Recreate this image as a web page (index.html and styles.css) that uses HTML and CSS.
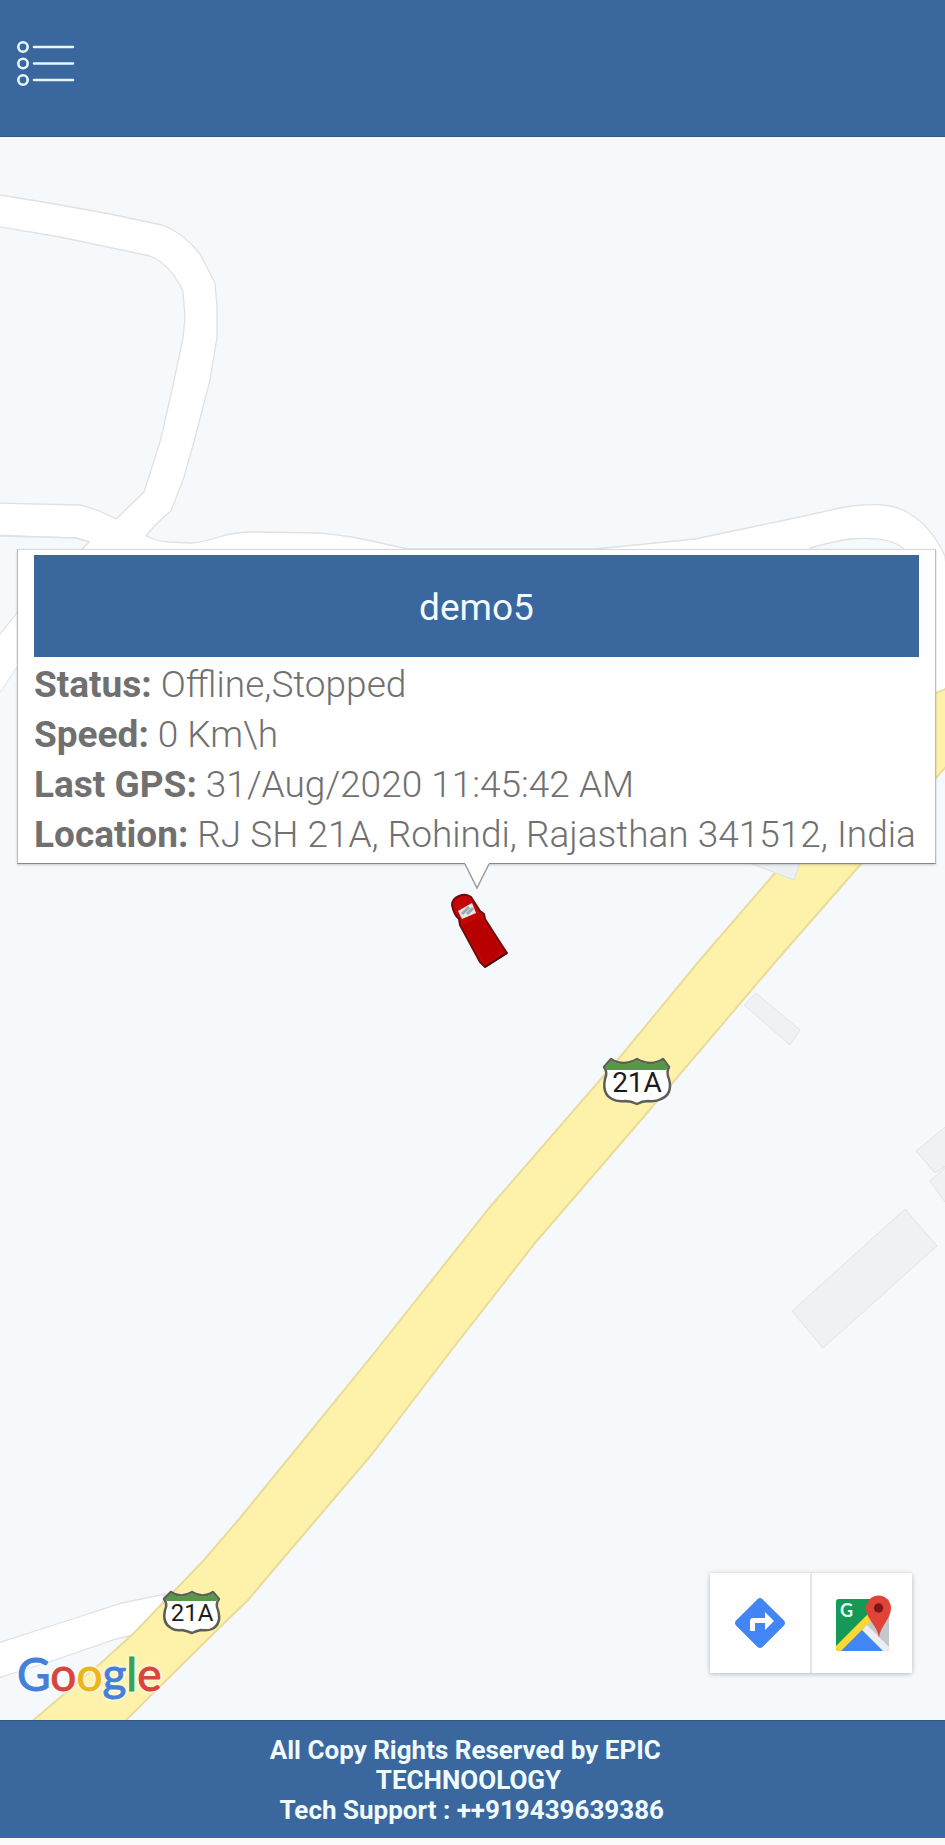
FILE: index.html
```html
<!DOCTYPE html>
<html lang="en">
<head>
<meta charset="utf-8">
<meta name="viewport" content="width=device-width, initial-scale=1">
<title>Vehicle tracking</title>
<link rel="stylesheet" href="styles.css">
</head>
<body>
<header class="topbar">
  <button class="menu" type="button" aria-label="Menu">
    <svg viewBox="0 0 58 46" width="58" height="46" fill="none" stroke="#e6f7ff" stroke-width="2.6">
      <circle cx="6" cy="6" r="4.7"/><circle cx="6" cy="22.500" r="4.700"/><circle cx="6" cy="39" r="4.700"/>
      <path d="M17 6h39M17 22.500h39M17 39h39" stroke-linecap="round"/>
    </svg>
  </button>
</header>

<main class="map">
  <svg class="canvas" viewBox="0 137 945 1583" preserveAspectRatio="xMidYMid slice" aria-hidden="true">
    <g fill="#eff2f5" stroke="#e1e4e7" stroke-width="1">
      <path d="M905 1209L937 1246L823 1348L792 1311Z"/>
      <path d="M950 1123L916 1151L935 1173L950 1163Z"/>
      <path d="M950 1163L930 1181L950 1209Z"/>
      <path d="M756 993L800 1030L790 1045L744 1005Z"/>
    </g>
    <g fill="#fff" stroke="#dfe1e3" stroke-width="1.300" stroke-linejoin="round">
      <path d="M-5 194L0 195L55 204L110 214L162 225Q182 232 200 254L215 283L217 307L217 337L210 380L195 438L184 477L171 511Q157 522 146 536Q156 541 168 542L192 543Q204 542 222 536Q236 532 255 532L320 533Q350 536 372 541L408 549L595 549L695 539L790 519L845 507Q885 501 903 510Q930 523 945 556L960 700H903V548Q888 536 850 539Q835 541 810 548V600H-5V535L40 537L75 538Q84 540 89 542L82 549L17 613L-5 644V503L80 505Q95 508 116 519L144 492L160 442L172 390L183 338L185 318L183 291Q170 264 150 256L60 237L-5 226Z"/>
    </g>
    <path d="M-5 536L40 537L75 538Q84 540 89 542L82 549L17 613L-5 641Z" fill="#f6f9fb" stroke="#dfe1e3" stroke-width="1.300"/>
    <path d="M-5 641L17 613L60 570V640L17 667L-5 700Z" fill="#fff" stroke="#dfe1e3"/>
    <path d="M-5 1644L60 1623L122 1603L165 1594L155 1630L116 1639L55 1660L-5 1679Z" fill="#fff" stroke="#dfe1e3" stroke-width="1.300"/>
    <path d="M950 687L929 696L775 873L700 960L620 1057L490 1207L375 1352L310 1432L240 1518L204 1560L135 1632L102 1662L30 1723H123L215 1632L248 1600L281 1561L372 1454L450 1352L535 1243L641 1120L777 960L861 864L950 762Z" fill="#fef2ab" stroke="#eadb9a" stroke-width="2"/>
    <path d="M747 862L794 880L801 860Z" fill="#edf0f2" stroke="#dfe1df"/>
    <g transform="translate(603 1056)">
      <path class="shield" d="M8 3Q20 11 34 3Q48 11 60 3L66 11Q63 16 66 23Q70 38 58 43Q53 46 45 45Q39 45 34 48Q28 45 22 45Q14 46 9 43Q-1 38 2 23Q5 16 1 11Z"/>
      <path d="M8 4Q20 12 34 4Q48 12 60 4L65 11L63 14H4L2 11Z" fill="#58974a"/>
      <text class="route route-large" x="34" y="36">21A</text>
    </g>
    <g transform="translate(163 1590)">
      <path class="shield" d="M8 2Q18 9 29 2Q40 9 50 2L56 9Q52 14 55 20Q59 34 49 39Q45 41 38 40Q33 41 29 43Q24 41 19 40Q12 41 8 38Q-1 33 2 20Q5 14 1 9Z"/>
      <path d="M8 3Q18 10 29 3Q40 10 50 3L55 9L53 11H4L2 9Z" fill="#58974a"/>
      <text class="route" x="29" y="31">21A</text>
    </g>
    <g stroke-linejoin="round">
      <path d="M452 905Q452 899 459 896Q466 893 471 897L480 911L484 914L485 919L501 944L507 953L485 967L480 962L460 925L459 919Q454 915 452 905Z" fill="#c30707" stroke="#720a0c" stroke-width="2"/>
      <path d="M462 926L481 917L504 952L485 964Z" fill="#b90000"/>
      <path d="M485 967L507 953" stroke="#530508" stroke-width="2"/>
      <path d="M458 911L472 903L476 913L462 919Z" fill="#e7e9e8"/>
      <path d="M462 914L469 907M467 914L473 908" stroke="#9aabae" stroke-width="3"/>
    </g>
  </svg>

  <section class="popup" aria-label="Vehicle details">
    <h1 class="name">demo5</h1>
    <p><b>Status:</b> Offline,Stopped</p>
    <p><b>Speed:</b> 0 Km\h</p>
    <p><b>Last GPS:</b> 31/Aug/2020 11:45:42 AM</p>
    <p><b>Location:</b> RJ SH 21A, Rohindi, Rajasthan 341512, India</p>
    <svg class="pointer" viewBox="0 0 26 28" width="26" height="28" aria-hidden="true">
      <path d="M1 0V2L13 26L25 2V0Z" fill="#fff"/>
      <path d="M1 2L13 26L25 2" fill="none" stroke="#9a9c9e" stroke-width="1.500"/>
    </svg>
  </section>

  <a class="google" href="#" aria-label="Google"><span class="blue">G</span><span class="red">o</span><span class="gold">o</span><span class="blue">g</span><span class="green">l</span><span class="red">e</span></a>

  <div class="actions">
    <button type="button" aria-label="Directions">
      <svg viewBox="0 0 52 52" width="52" height="52">
        <path d="M23.500 2.200Q26 0 28.500 2.200L50 23.500Q52 26 50 28.500L28.500 50Q26 52 23.500 50L2 28.500Q0 26 2 23.500Z" fill="#4285f4"/>
        <path d="M16 34V24Q16 21 19 21H31V15L40 24L31 33V26H21V34Z" fill="#fff"/>
      </svg>
    </button>
    <button type="button" aria-label="Open in Google Maps">
      <svg viewBox="0 0 58 58" width="58" height="58">
        <defs><clipPath id="tile"><rect x="3" y="5" width="53" height="52" rx="3"/></clipPath></defs>
        <g clip-path="url(#tile)">
          <path d="M0 4H56V58H0Z" fill="#159957"/>
          <path d="M28 30L56 3V58Z" fill="#c4c7cb"/>
          <path d="M7 58L29 36L51 58Z" fill="#4285f4"/>
          <path d="M0 55L36 19L40 25L7 58H0Z" fill="#fdd835"/>
          <path d="M29 36L34 31L60 57V60H53Z" fill="#eceef5"/>
        </g>
        <text class="tile-g" x="7" y="23">G</text>
        <path d="M46 44C45 32 33 25 33 14A12.500 12.500 0 0 1 58 14C58 25 47 32 46 44Z" fill="#e24339"/>
        <circle cx="45.500" cy="14" r="4.700" fill="#7c1815"/>
      </svg>
    </button>
  </div>
</main>

<footer class="footer">
  All Copy Rights Reserved by EPIC&nbsp;<br>TECHNOOLOGY<br>&nbsp;Tech Support : ++919439639386
</footer>
</body>
</html>
```
FILE: styles.css
```css
* {
  box-sizing: border-box;
}

body {
  margin: 0;
  min-height: 100vh;
  padding-bottom: 7px;
  display: flex;
  flex-direction: column;
  background: #fafafa;
  font-family: Roboto, "Liberation Sans", sans-serif;
}

.topbar {
  padding: 41px 17px 47px;
  background: #3a679d;
  border-bottom: 1px solid #315a83;
}

button {
  margin: 0;
  padding: 0;
  border: 0;
  background: none;
  cursor: pointer;
}

button svg {
  display: block;
}

.menu {
  display: block;
  padding-bottom: 2px;
}

.map {
  position: relative;
  flex: 1;
  overflow: hidden;
  background: #f6f9fb;
}

.canvas {
  position: absolute;
  width: 100%;
  height: 100%;
}

.shield {
  fill: #fff;
  stroke: #5d5e57;
  stroke-width: 2.5px;
  stroke-linejoin: round;
}

.route {
  fill: #1c1c1c;
  font-size: 24px;
  text-anchor: middle;
}

.route-large {
  font-size: 28px;
}

.popup {
  position: absolute;
  top: 412px;
  left: 17px;
  right: 9px;
  padding: 5px 16px 3px;
  border: 1px solid #b9bbbc;
  border-top-color: #d8d8d8;
  border-bottom-color: #858789;
  background: #fff;
  box-shadow: 0 1px 2px #0003;
  color: #707070;
  font-size: 37px;
  font-weight: 350;
  line-height: 50px;
}

.popup p {
  margin: 0;
}

.popup b {
  font-weight: 700;
}

.name {
  margin: 0 0 3px;
  padding: 28px 0 24px;
  background: #3a679d;
  color: #f2fbff;
  font-size: 37px;
  font-weight: 400;
  text-align: center;
}

.pointer {
  position: absolute;
  top: 100%;
  left: 50%;
  margin: -1px 0 0 -13px;
}

.google {
  position: absolute;
  left: 17px;
  bottom: 17px;
  font-family: Lato, sans-serif;
  font-size: 46px;
  line-height: 58px;
  text-decoration: none;
  text-shadow: 0 0 3px #fff, 0 0 3px #fff, 0 0 5px #fff;
  -webkit-text-stroke: 1px;
}

.blue { color: #4580d8; }
.red { color: #d8453e; }
.gold { color: #ecb51c; }
.green { color: #36a156; }

.actions {
  position: absolute;
  right: 33px;
  bottom: 47px;
  display: flex;
  gap: 2px;
  border-radius: 2px;
  background: #e3e5e7;
  box-shadow: 0 1px 5px #0004;
}

.actions button {
  width: 100px;
  height: 100px;
  display: grid;
  place-items: center;
  background: #fefefe;
}

.tile-g {
  fill: #e6fff2;
  font-family: Lato, sans-serif;
  font-size: 18px;
  font-weight: 700;
}

.footer {
  padding: 14px 8px 13px 0;
  background: #3a679d;
  border-top: 1px solid #315a83;
  color: #f0fbff;
  font-size: 26px;
  font-weight: 700;
  line-height: 30px;
  text-align: center;
}
```
